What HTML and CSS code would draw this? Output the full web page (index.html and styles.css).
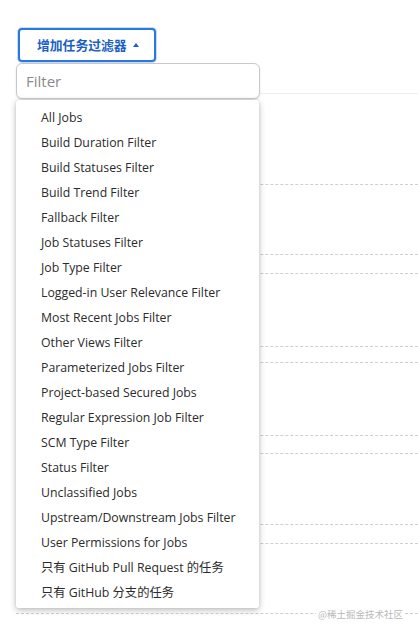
FILE: index.html
```html
<!DOCTYPE html>
<html lang="zh-CN">
<head>
<meta charset="utf-8">
<title>增加任务过滤器</title>
<link rel="stylesheet" href="styles.css">
</head>
<body>
<div class="page">
  <button class="add-btn" type="button">增加任务过滤器<span class="caret"></span></button>
  <div class="table">
    <div class="row r1"></div>
    <div class="row r2"></div>
    <div class="row r3"></div>
    <div class="row r4"></div>
    <div class="row r5"></div>
    <div class="row r6"></div>
    <div class="row r7"></div>
    <div class="row r8"></div>
    <div class="row r9"></div>
    <div class="row r10"></div>
  </div>

  <div class="popup">
    <input class="filter" type="text" placeholder="Filter">
    <ul class="menu">
      <li>All Jobs</li>
      <li>Build Duration Filter</li>
      <li>Build Statuses Filter</li>
      <li>Build Trend Filter</li>
      <li>Fallback Filter</li>
      <li>Job Statuses Filter</li>
      <li>Job Type Filter</li>
      <li>Logged-in User Relevance Filter</li>
      <li>Most Recent Jobs Filter</li>
      <li>Other Views Filter</li>
      <li>Parameterized Jobs Filter</li>
      <li>Project-based Secured Jobs</li>
      <li>Regular Expression Job Filter</li>
      <li>SCM Type Filter</li>
      <li>Status Filter</li>
      <li>Unclassified Jobs</li>
      <li>Upstream/Downstream Jobs Filter</li>
      <li>User Permissions for Jobs</li>
      <li>只有 GitHub Pull Request 的任务</li>
      <li>只有 GitHub 分支的任务</li>
    </ul>
  </div>
  <div class="watermark">@稀土掘金技术社区</div>
</div>
</body>
</html>
```

FILE: styles.css
```css
* { box-sizing: border-box; }
html, body {
  margin: 0;
  padding: 0;
  background: #fff;
}
body {
  font-family: "Open Sans", "Noto Sans CJK SC", sans-serif;
  color: #333;
}
.page {
  position: relative;
  width: 418px;
  height: 630px;
  overflow: hidden;
  padding: 28px 0 0 18px;
}
.add-btn {
  display: flex;
  align-items: center;
  height: 34px;
  padding: 0 15px 0 17px;
  border: 2px solid #2a78df;
  border-radius: 4px;
  background: #fff;
  box-shadow: 0 0 0 1px rgba(42, 120, 223, 0.25);
  color: #1b5fc6;
  font-family: "Noto Sans CJK SC", sans-serif;
  font-size: 12.8px;
  font-weight: 700;
  line-height: 1;
}
.caret {
  width: 0;
  height: 0;
  margin-left: 6px;
  border-left: 3.5px solid transparent;
  border-right: 3.5px solid transparent;
  border-bottom: 4px solid #1b5fc6;
}
.table {
  margin: 31px 0 0 -2px;
  border-top: 1px solid #eeeeee;
}
.row {
  border-bottom: 1px dashed #cfcfcf;
}
.r1 { height: 91px; }
.r2 { height: 70px; }
.r3 { height: 19px; }
.r4 { height: 73px; }
.r5 { height: 16px; }
.r6 { height: 73px; }
.r7 { height: 18px; }
.r8 { height: 71px; }
.r9 { height: 19px; }
.r10 { height: 70px; }

.popup {
  position: absolute;
  left: 16px;
  top: 63px;
  width: 244px;
}
.filter {
  display: block;
  width: 244px;
  height: 36px;
  margin: 0;
  padding: 0 9px;
  border: 1px solid #c9c9c9;
  border-radius: 6px;
  box-shadow: 0 1px 2px rgba(0, 0, 0, 0.12);
  font-family: "Open Sans", sans-serif;
  font-size: 15px;
  color: #333;
  outline: none;
}
.filter::placeholder {
  color: #8a8a8a;
}
.menu {
  list-style: none;
  width: 243px;
  margin: 1px 0 0;
  padding: 5px 0 3px;
  background: #fff;
  border-radius: 2px;
  box-shadow: 0 2px 6px rgba(0, 0, 0, 0.28), 0 0 1px rgba(0, 0, 0, 0.2);
}
.menu li {
  height: 25px;
  line-height: 25px;
  padding-left: 25px;
  font-size: 12.3px;
  color: #2b2b2b;
  white-space: nowrap;
}
.watermark {
  position: absolute;
  right: 13px;
  top: 607px;
  font-family: "Noto Sans CJK SC", sans-serif;
  font-size: 9.5px;
  color: #b9b9b9;
  background: #fff;
  padding: 0 2px;
}
```
